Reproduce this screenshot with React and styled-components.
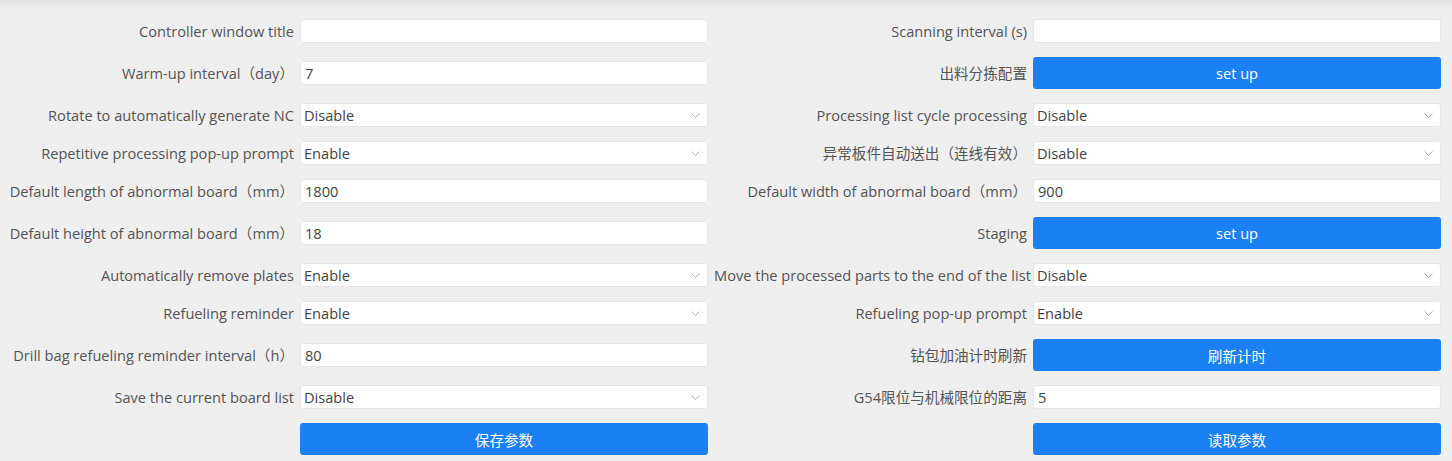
import React from "react";
import styled, { createGlobalStyle } from "styled-components";

const Global = createGlobalStyle`
  html, body { margin: 0; padding: 0; }
  body {
    background: #efefef;
    font-family: "Open Sans", "Noto Sans CJK SC", sans-serif;
    font-size: 14px;
  }
`;

const Page = styled.div`
  min-height: 461px;
  box-sizing: border-box;
  background: linear-gradient(#e2e2e2 0px, #efefef 8px, #efefef 100%);
  padding-top: 19px;
`;

const Form = styled.div`
  display: grid;
  grid-template-columns: 294px 408px 313px 408px;
  column-gap: 6px;
  row-gap: 14px;
  align-items: center;
`;

const Label = styled.div`
  text-align: right;
  white-space: nowrap;
  color: #555;
  font-size: 14.6px;
  line-height: 24px;
  font-family: "Open Sans", "Noto Sans CJK SC", sans-serif;
`;

const Input = styled.input`
  box-sizing: border-box;
  width: 100%;
  height: 24px;
  margin: 0;
  border: 1px solid #e6e6e6;
  border-radius: 3px;
  background: #fff;
  padding: 0 4px;
  font-family: "Open Sans", "Noto Sans CJK SC", sans-serif;
  font-size: 14.6px;
  color: #444;
  outline: none;
`;

const SelectWrap = styled.div`
  position: relative;
  height: 24px;
`;

const Select = styled.select`
  appearance: none;
  -webkit-appearance: none;
  box-sizing: border-box;
  width: 100%;
  height: 24px;
  margin: 0;
  border: 1px solid #e6e6e6;
  border-radius: 3px;
  background: #fff;
  padding: 0 3px;
  font-family: "Open Sans", "Noto Sans CJK SC", sans-serif;
  font-size: 14.6px;
  color: #444;
  outline: none;
`;

const Chevron = styled.svg`
  position: absolute;
  right: 8px;
  top: 10px;
  pointer-events: none;
`;

const Button = styled.button`
  box-sizing: border-box;
  width: 100%;
  height: 32px;
  margin: 0;
  border: none;
  border-radius: 3px;
  background: #1a80f4;
  color: #fff;
  font-family: "Open Sans", "Noto Sans CJK SC", sans-serif;
  font-size: 14.6px;
  cursor: pointer;
`;

function Field({ item }) {
  if (!item) return <div />;
  if (item.type === "input") return <Input defaultValue={item.value} />;
  if (item.type === "select")
    return (
      <SelectWrap>
        <Select defaultValue={item.value}>
          <option>Enable</option>
          <option>Disable</option>
        </Select>
        <Chevron width="9" height="5" viewBox="0 0 9 5">
          <path d="M0.5 0.5 L4.5 4.5 L8.5 0.5" fill="none" stroke="#b0b0b0" strokeWidth="1" />
        </Chevron>
      </SelectWrap>
    );
  return <Button>{item.value}</Button>;
}

const rows = [
  [
    { label: "Controller window title", type: "input", value: "" },
    { label: "Scanning interval (s)", type: "input", value: "" },
  ],
  [
    { label: "Warm-up interval（day）", type: "input", value: "7" },
    { label: "出料分拣配置", type: "button", value: "set up" },
  ],
  [
    { label: "Rotate to automatically generate NC", type: "select", value: "Disable" },
    { label: "Processing list cycle processing", type: "select", value: "Disable" },
  ],
  [
    { label: "Repetitive processing pop-up prompt", type: "select", value: "Enable" },
    { label: "异常板件自动送出（连线有效）", type: "select", value: "Disable" },
  ],
  [
    { label: "Default length of abnormal board（mm）", type: "input", value: "1800" },
    { label: "Default width of abnormal board（mm）", type: "input", value: "900" },
  ],
  [
    { label: "Default height of abnormal board（mm）", type: "input", value: "18" },
    { label: "Staging", type: "button", value: "set up" },
  ],
  [
    { label: "Automatically remove plates", type: "select", value: "Enable" },
    { label: "Move the processed parts to the end of the list", type: "select", value: "Disable" },
  ],
  [
    { label: "Refueling reminder", type: "select", value: "Enable" },
    { label: "Refueling pop-up prompt", type: "select", value: "Enable" },
  ],
  [
    { label: "Drill bag refueling reminder interval（h）", type: "input", value: "80" },
    { label: "钻包加油计时刷新", type: "button", value: "刷新计时" },
  ],
  [
    { label: "Save the current board list", type: "select", value: "Disable" },
    { label: "G54限位与机械限位的距离", type: "input", value: "5" },
  ],
  [
    { label: "", type: "button", value: "保存参数" },
    { label: "", type: "button", value: "读取参数" },
  ],
];

export default function App() {
  return (
    <Page>
      <Global />
      <Form>
        {rows.map((row, i) => (
          <React.Fragment key={i}>
            {row.map((item, j) => (
              <React.Fragment key={j}>
                <Label>{item.label}</Label>
                <Field item={item} />
              </React.Fragment>
            ))}
          </React.Fragment>
        ))}
      </Form>
    </Page>
  );
}
